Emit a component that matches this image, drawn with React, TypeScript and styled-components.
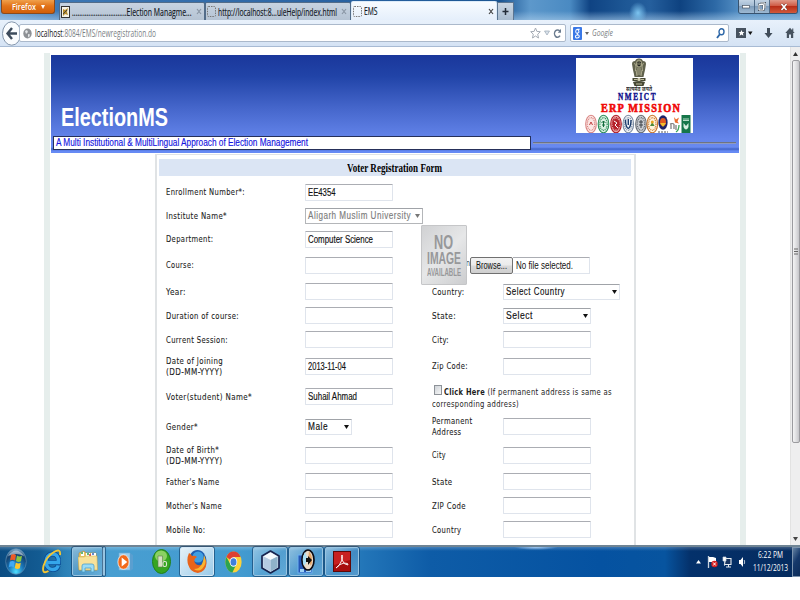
import React, { useLayoutEffect, useRef } from "react";
import styled, { createGlobalStyle, css } from "styled-components";

const ui = `"Open Sans", "Noto Sans", sans-serif`;
const verdana = `"DejaVu Sans", sans-serif`;
const arial = `"Liberation Sans", Arial, sans-serif`;
const times = `"Liberation Serif", "Times New Roman", serif`;

const Global = createGlobalStyle`
  * { box-sizing: border-box; }
  html, body { margin: 0; background: #fff; overflow: hidden; }
  svg { display: block; flex: none; }
`;

/* ---------- condensed text ---------- */

const FitBox = styled.span<{ $w: number }>`
  display: block;
  flex: none;
  width: ${(p) => p.$w}px;
  white-space: pre;
`;
const FitInner = styled.span`
  display: inline-block;
  transform-origin: 0 50%;
`;

function Fit({ w, children }: { w: number; children: React.ReactNode }) {
  const ref = useRef<HTMLSpanElement>(null);
  useLayoutEffect(() => {
    const el = ref.current;
    if (!el) return;
    el.style.transform = "none";
    const natural = el.getBoundingClientRect().width;
    el.style.transform = `scaleX(${w / natural})`;
  }, [w, children]);
  return (
    <FitBox $w={w}>
      <FitInner ref={ref}>{children}</FitInner>
    </FitBox>
  );
}

/* ---------- browser chrome ---------- */

const Screen = styled.div`
  width: 800px;
  height: 600px;
  display: flex;
  flex-direction: column;
  background: #fff;
  overflow: hidden;
`;
const TabStrip = styled.div`
  height: 20px;
  flex: none;
  display: flex;
  align-items: flex-start;
  background:
    radial-gradient(ellipse 9px 11px at 638px 13px, #7cc4f0, transparent),
    linear-gradient(180deg, rgba(255, 255, 255, 0) 55%, rgba(170, 205, 235, 0.6) 100%),
    linear-gradient(90deg, #6fa0d0 0, #3c77b4 60px, #2d66a5 300px, #1b5592 500px, #5d98cb 530px, #4a8ac2 570px, #0f4383 590px, #1d5795 625px, #255f9d 650px, #0e4280 680px, #2d69a6 715px, #5590c5 740px, #5c96c8 800px);
`;
const FirefoxButton = styled.div`
  width: 54px;
  height: 14px;
  margin: 0 4px 0 1px;
  padding: 0 0 0 10px;
  display: flex;
  align-items: center;
  gap: 5px;
  background: linear-gradient(#f0a04c, #e2741a 45%, #d25f08);
  border: 1px solid #8b4a1c;
  border-top: 0;
  border-radius: 0 0 3px 3px;
  color: #fff;
  font: 600 8.8px/12px ${ui};
`;
const Tab = styled.div<{ $active?: boolean }>`
  height: 18px;
  width: 146px;
  margin-top: 2px;
  padding: 0 4px 0 1px;
  display: flex;
  align-items: center;
  gap: 2px;
  color: #10151c;
  font: 10px/16px ${ui};
  -webkit-text-stroke: 0.15px currentColor;
  border: 1px solid #526c89;
  border-bottom: 0;
  border-radius: 2px 2px 0 0;
  background: linear-gradient(#c7d3e1, #b5c3d3);
  ${(p) =>
    p.$active &&
    css`
      margin-top: 1px;
      height: 19px;
      padding-right: 2px;
      border-color: #dcebf9;
      background: linear-gradient(#f7fbff, #e5effb);
    `}
`;
const Grow = styled.div`
  flex: 1;
`;
const NewTab = styled.div`
  width: 17px;
  height: 18px;
  margin-top: 2px;
  display: grid;
  place-items: center;
  border: 1px solid #5b7591;
  border-bottom: 0;
  background: linear-gradient(#c9d5e2, #a9bccf);
`;
const WindowControls = styled.div`
  display: flex;
  width: 60px;
  height: 14px;
  margin-right: 2px;
  border: 1px solid #38536f;
  border-top: 0;
  border-radius: 0 0 3px 3px;
  overflow: hidden;
`;
const Control = styled.div<{ $close?: boolean }>`
  flex: ${(p) => (p.$close ? "0 0 27px" : "1")};
  display: grid;
  place-items: center;
  border-right: ${(p) => (p.$close ? "0" : "1px solid #4f6a86")};
  background: ${(p) =>
    p.$close
      ? "linear-gradient(#e09a8a, #cf5b45 45%, #b82e18 50%, #d2593a)"
      : "linear-gradient(#c2d3e4, #a3bbd3 45%, #7f9dbb 50%, #9db9d3)"};
`;
const NavBar = styled.div`
  height: 27px;
  flex: none;
  display: flex;
  align-items: center;
  padding-left: 2px;
  background: linear-gradient(#e8f1fb, #d5e3f4);
  border-bottom: 1px solid #a8bbd4;
`;
const Field = styled.div<{ $w: number; $url?: boolean }>`
  width: ${(p) => p.$w}px;
  height: 18px;
  display: flex;
  align-items: center;
  background: #fff;
  border: 1px solid #abb9cb;
  border-radius: 2px;
  font: ${(p) => (p.$url ? "10px" : "italic 9.5px")}/16px ${ui};
  color: #7b7f85;
  margin-left: ${(p) => (p.$url ? "-3px" : "4px")};
  padding: 0 3px 0 ${(p) => (p.$url ? "3px" : "2px")};
  gap: 3px;
`;
const Host = styled.b`
  font-weight: 400;
  color: #111;
`;
const NavIcons = styled.div`
  display: flex;
  align-items: center;
  margin-left: 7px;
`;
const IconSlot = styled.div<{ $ml: number }>`
  margin-left: ${(p) => p.$ml}px;
`;

/* ---------- page ---------- */

const Viewport = styled.div`
  height: 498px;
  flex: none;
  display: flex;
  background: #fff;
`;
const Rail = styled.div<{ $ml: number }>`
  width: 6px;
  margin: 6px 0 0 ${(p) => p.$ml}px;
  background: #e6eeec;
`;
const Page = styled.main`
  width: 688px;
  margin: 8px 1px 0;
  display: flex;
  flex-direction: column;
  align-items: center;
`;
const Banner = styled.header`
  width: 688px;
  height: 98px;
  flex: none;
  display: flex;
  flex-direction: column;
  background: linear-gradient(#1a379b 0, #2144a8 22%, #4667cc 55%, #6384ea 85%, #698af0 94%, #4264c8 96%, #668af4 98%);
`;
const BannerTop = styled.div`
  height: 81px;
  display: flex;
  justify-content: space-between;
  padding: 3px 46px 0 9.5px;
`;
const SiteName = styled.h1`
  margin: 44px 0 0;
  color: #fff;
  font: bold 26px/30px ${arial};
`;
const LogoCard = styled.div`
  width: 117px;
  height: 75px;
  padding-left: 8px;
  background: #fff;
  display: flex;
  flex-direction: column;
  align-items: center;
  overflow: hidden;
`;
const Motto = styled.div`
  font: bold 6px/7px "Noto Sans", sans-serif;
  color: #333;
  margin-top: -1px;
`;
const Nmeict = styled.div`
  margin-left: -2px;
  font: bold 9.5px/9px ${times};
  color: #10108c;
  -webkit-text-stroke: 0.4px #10108c;
  letter-spacing: 2px;
`;
const Erp = styled.div`
  margin-left: 5px;
  font: bold 12px/12px ${times};
  color: #f00808;
  -webkit-text-stroke: 0.6px #f00808;
  letter-spacing: 1.4px;
`;
const TagRow = styled.div`
  height: 14px;
  display: flex;
  align-items: center;
  gap: 2px;
  padding: 0 3px 0 2px;
`;
const TagLine = styled.div`
  width: 478px;
  height: 14px;
  padding-left: 2px;
  background: #fff;
  border: 1px solid #26305a;
  border-width: 1px 1.5px;
  color: #1414e0;
  font: 10.3px/12px ${arial};
  -webkit-text-stroke: 0.15px #1414e0;
`;
const Rule = styled.div`
  flex: 1;
  height: 2px;
  margin-bottom: 1px;
  background: #6f7480;
  border-bottom: 1px solid #8f9bc0;
`;
const Panel = styled.section`
  width: 481px;
  height: 391px;
  margin-top: 1px;
  padding: 4px 3px 0 2px;
  border: 1px solid #e0e3e5;
  border-width: 1px 2px 0;
`;
const PanelTitle = styled.h2`
  margin: 0;
  height: 17px;
  display: flex;
  justify-content: center;
  background: #dbe5f4;
  color: #000;
  font: bold 11.5px/18px ${times};
`;
const Form = styled.form`
  margin: 4px 0 0 7.5px;
  display: grid;
  grid-template-columns: 139px 127px 71px 1fr;
  grid-template-rows: 24px 23px 24px 28px 25px 23px 25px 28px 33px 27px 30px 23px 25px 23px;
  align-items: center;
`;
const Label = styled.div`
  color: #1c1c1c;
  font: 9.2px/10.6px ${verdana};
  letter-spacing: 0.5px;
  -webkit-text-stroke: 0.1px #1c1c1c;
  padding-top: 1px;
`;
const Agree = styled.div`
  grid-column: span 2;
  color: #1c1c1c;
  font: 9.2px/11.2px ${verdana};
  letter-spacing: 0.4px;
  padding-top: 2px;
`;
const AgreeLine = styled.div`
  display: flex;
  align-items: center;
`;
const Check = styled.i`
  width: 8px;
  height: 10px;
  margin: -3px 2px 0 2px;
  border: 1px solid #8d9298;
  background: linear-gradient(135deg, #cfd3d8, #f6f6f6);
`;
const Input = styled.div`
  width: 88px;
  height: 17px;
  padding: 1px 0 0 1.5px;
  border: 1px solid #dfe4ec;
  border-top-color: #abadb3;
  border-radius: 1px;
  background: #fff;
  color: #111;
  font: 10px/14px ${arial};
  -webkit-text-stroke: 0.15px #111;
`;
const Select = styled.div<{ $w: number; $off?: boolean }>`
  width: ${(p) => p.$w}px;
  height: 16px;
  padding: 0 2px;
  display: flex;
  align-items: center;
  justify-content: space-between;
  border: 1px solid ${(p) => (p.$off ? "#b4b6b9" : "#dfe4ec")};
  border-top-color: #a0a3a8;
  background: #fff;
  color: ${(p) => (p.$off ? "#7c7c7c" : "#111")};
  font: 10px/14px ${arial};
  letter-spacing: 0.6px;
  -webkit-text-stroke: 0.15px currentColor;
`;
const Photo = styled.div`
  position: relative;
  grid-column: span 2;
  height: 17px;
`;
const FileRow = styled.div`
  display: flex;
  align-items: center;
  padding-left: 34px;
  height: 17px;
`;
const Tail = styled.div`
  width: 4px;
  height: 17px;
  font: 9.2px/11px ${verdana};
  color: #333;
`;
const Browse = styled.div`
  width: 43px;
  height: 17px;
  padding-left: 5px;
  border: 1px solid #707070;
  border-radius: 2px;
  background: linear-gradient(#f2f2f2, #ebebeb 48%, #dadada 52%, #cfcfcf);
  color: #111;
  font: 10px/15px ${arial};
`;
const FileName = styled.div`
  width: 77px;
  height: 17px;
  padding-left: 3px;
  border: 1px solid #dfe4ec;
  border-top-color: #abadb3;
  border-left: 0;
  color: #111;
  font: 10px/15px ${arial};
`;
/* The portrait placeholder overlaps the label and the file picker. */
const NoImage = styled.div`
  position: absolute;
  left: -11px;
  top: -32px;
  width: 46px;
  height: 60px;
  padding: 6px 0 0 5px;
  border-radius: 1px;
  background: linear-gradient(135deg, #d0d1d3, #e6e7e8 50%, #cccdcf);
  border: 1px solid #c5c6c8;
  color: #97989a;
  font-family: ${arial};
  font-weight: bold;
`;
const NoImageLine = styled.div<{ $size: number; $h: number; $ml?: number }>`
  font-size: ${(p) => p.$size}px;
  line-height: ${(p) => p.$h}px;
  margin-left: ${(p) => p.$ml ?? 0}px;
`;
const ScrollBar = styled.div`
  width: 10px;
  margin-left: auto;
  display: flex;
  flex-direction: column;
  align-items: center;
  background: #eeeeef;
  border-left: 1px solid #e2e2e2;
`;
const Arrow = styled.div<{ $h: number }>`
  height: ${(p) => p.$h}px;
  display: grid;
  place-items: center;
`;
const Thumb = styled.div`
  width: 8px;
  height: 383px;
  display: grid;
  place-items: center;
  border: 1px solid #9b9b9f;
  border-radius: 2px;
  background: linear-gradient(90deg, #f4f4f5, #e0e0e2 50%, #c6c6ca);
`;

/* ---------- taskbar ---------- */

const TaskBar = styled.footer`
  height: 32px;
  flex: none;
  display: flex;
  border-top: 2px solid #6f8494;
  background:
    radial-gradient(ellipse 22px 3px at 536px 0, rgba(180, 215, 250, 0.9), transparent),
    linear-gradient(180deg, rgba(255, 255, 255, 0.22) 0, rgba(255, 255, 255, 0) 4px),
    linear-gradient(90deg, #0b4c82 0, #135b92 40px, #2b80b6 64px, #489ed1 110px, #439bd0 240px, #3186c2 330px, #2275b8 365px, #0e5ca7 430px, #0552a1 600px, #07549f 665px, #04316b 690px, #052b5e 800px);
`;
const Slot = styled.div<{ $w: number; $ml?: number; $mode?: "open" | "active" }>`
  width: ${(p) => p.$w}px;
  height: 29px;
  margin-left: ${(p) => p.$ml ?? 0}px;
  display: grid;
  place-items: center;
  ${(p) =>
    p.$mode &&
    css`
      border: 1px solid ${p.$mode === "active" ? "#d4e8f6" : "#98c4e1"};
      outline: 1px solid rgba(10, 50, 90, 0.55);
      outline-offset: 0;
      border-radius: 2px;
      background: ${p.$mode === "active"
        ? "linear-gradient(135deg, rgba(255,255,255,.85), rgba(200,228,246,.65))"
        : "linear-gradient(135deg, rgba(255,255,255,.42), rgba(255,255,255,.12) 55%, rgba(170,215,240,.35))"};
    `}
`;
const Tray = styled.div`
  margin-left: auto;
  display: flex;
  align-items: center;
`;
const Clock = styled.div`
  width: 38px;
  margin-left: 5px;
  display: flex;
  flex-direction: column;
  align-items: center;
  color: #fff;
  font: 9.6px/12.6px ${ui};
`;
const Peek = styled.div`
  width: 8px;
  height: 30px;
  margin-left: 3px;
  border: 1px solid #7c93ad;
  border-right: 0;
  background: linear-gradient(120deg, #6482a2, #16396b 45%, #0c2c59);
`;

const Down = ({ w = 6, h = 4, c = "#111" }: { w?: number; h?: number; c?: string }) => (
  <svg width={w} height={h} viewBox="0 0 6 4" preserveAspectRatio="none">
    <path d="M0 0h6L3 4z" fill={c} />
  </svg>
);
const Cross = ({ c }: { c: string }) => (
  <svg width="6" height="7" viewBox="0 0 6 7">
    <path d="M1 1l4 5M5 1L1 6" stroke={c} strokeWidth="1.2" />
  </svg>
);
const BlankIcon = () => (
  <svg width="9" height="11" viewBox="0 0 9 11">
    <rect x=".5" y=".5" width="8" height="10" rx="1" fill="none" stroke="#777" strokeDasharray="1.5 1" />
  </svg>
);

const Emblem = () => (
  <svg width="16" height="29" viewBox="0 0 16 29">
    <path d="M4 3q1-3 4-2.500Q11 0 12 3q3 0 3 3l-1 6q-1 4-1.500 7h-9Q3 16 2 12L1 6Q1 3 4 3z" fill="#60614c" />
    <path d="M6 3q2-2 4 0l.6 4-1 2H6.500l-1-2zM3.500 5l1.500 3-.5 5M12.500 5L11 8l.5 5M7 10v7M9 10v7M5 12l1 6M11 12l-1 6" stroke="#b4b294" fill="none" strokeWidth=".9" />
    <path d="M6.500 4.500h1M8.800 4.500h1M7 7.500h2" stroke="#222" />
    <path d="M1.500 20h13v3h-13zM2 24q6-2 12 0l-1.500 4h-9z" fill="#484935" />
    <path d="M3 21.500h3M10 21.500h3M5 26h6" stroke="#c0bea0" />
    <circle cx="8" cy="21.500" r="1.700" fill="#d0cdb0" />
  </svg>
);

const seals = [
  { x: 6, c: "#d98583", f: "#fbe6e4" },
  { x: 18.5, c: "#2b8c58", f: "#d8efe0" },
  { x: 31, c: "#b01b25", f: "#e9a5a5" },
  { x: 43.3, c: "#7c8da3", f: "#f4f6f9" },
  { x: 56, c: "#666b72", f: "#c9cdd2" },
  { x: 67.3, c: "#c9762f", f: "#fff3dc" },
];
const Seals = () => (
  <svg width="107" height="20" viewBox="0 0 107 20">
    {seals.map((s, i) => (
      <g key={i}>
        <ellipse cx={s.x} cy="10" rx="5.300" ry="8.800" fill={s.f} stroke={s.c} strokeWidth="1.100" />
        <ellipse cx={s.x} cy="10" rx="3.700" ry="6.300" fill="none" stroke={s.c} strokeDasharray="1 .8" strokeWidth="1.200" />
      </g>
    ))}
    <path d="M4.500 11L6 8l1.500 3" stroke="#c04040" fill="none" />
    <path d="M18.500 7v6M16.500 9l2-2 2 2M17 11h3" stroke="#116b3c" fill="none" />
    <ellipse cx="31" cy="10" rx="3.500" ry="5.500" fill="#b5202a" /><path d="M29 7l3 2-2 2 3 3" stroke="#fff" fill="none" />
    <path d="M40.500 6q0 7 2.800 8.500Q46 13 46 6M43.300 5v6" stroke="#1c3d6d" fill="none" strokeWidth="1.400" />
    <path d="M54 8h4M54 11h4M56 6v8" stroke="#3b4046" />
    <path d="M65 12l2.300-4 2.300 4z" fill="#4a8a3a" /><circle cx="67.300" cy="8" r="1.500" fill="#e7a01e" />
    <ellipse cx="78" cy="8.500" rx="4.600" ry="7.300" fill="#1d2368" />
    <ellipse cx="78" cy="8" rx="3" ry="4" fill="#e15a20" /><path d="M75 9h6l-3 4z" fill="#f0c130" />
    <path d="M73 18h10" stroke="#555" strokeDasharray="2 1" />
    <path d="M85 10q2-1 4 0M86 10v5M89 10v5M91 11v5" stroke="#777" fill="none" strokeWidth="1.200" />
    <path d="M89 3l2 2.500 3-2-1.500 4 1.500 2-4-1z" fill="#e96b2b" /><path d="M94 11q0 5-3 7" stroke="#3ba457" strokeWidth="1.300" fill="none" />
    <rect x="96.500" y="1" width="9" height="18" fill="#16764a" />
    <path d="M98 5h6M98 6.500h6" stroke="#b7dbc7" /><path d="M98.500 9v4q2.500 5 5 0V9l-2.500 3z" fill="#d8eee1" />
  </svg>
);

/* ---------- data ---------- */

type Cell = React.ReactNode;
const L = (lines: [string, number][]) => (
  <Label>{lines.map(([t, w]) => <Fit key={t} w={w}>{t}</Fit>)}</Label>
);
const I = (text?: string, w = 0) => <Input>{text && <Fit w={w}>{text}</Fit>}</Input>;
const S = (text: string, w: number, box: number, off = false) => (
  <Select $w={box} $off={off}>
    <Fit w={w}>{text}</Fit>
    <Down w={5} c={off ? "#777" : "#111"} />
  </Select>
);

const rows: Cell[][] = [
  [L([["Enrollment Number*:", 79]]), I("EE4354", 27.5), <i />, <i />],
  [L([["Institute Name*", 61]]), S("Aligarh Muslim University", 103, 118, true), <i />, <i />],
  [L([["Department:", 47.5]]), I("Computer Science", 65), <i />, <i />],
  [
    L([["Course:", 28]]),
    I(),
    <Photo>
      <FileRow>
        <Tail><Fit w={4}>n</Fit></Tail>
        <Browse><Fit w={31}>Browse...</Fit></Browse>
        <FileName><Fit w={57}>No file selected.</Fit></FileName>
      </FileRow>
      <NoImage>
        <NoImageLine $size={21} $h={19} $ml={7}><Fit w={19}>NO</Fit></NoImageLine>
        <NoImageLine $size={17} $h={16}><Fit w={34}>IMAGE</Fit></NoImageLine>
        <NoImageLine $size={11} $h={10}><Fit w={34}>AVAILABLE</Fit></NoImageLine>
      </NoImage>
    </Photo>,
  ],
  [L([["Year:", 20]]), I(), L([["Country:", 32.5]]), S("Select Country", 59, 117)],
  [L([["Duration of course:", 73]]), I(), L([["State:", 24]]), S("Select", 27, 88)],
  [L([["Current Session:", 62]]), I(), L([["City:", 17]]), I()],
  [L([["Date of Joining", 57], ["(DD-MM-YYYY)", 56.5]]), I("2013-11-04", 38), L([["Zip Code:", 36]]), I()],
  [
    L([["Voter(student) Name*", 86]]),
    I("Suhail Ahmad", 49),
    <Agree>
      <AgreeLine>
        <Check />
        <Fit w={41}><b>Click Here</b></Fit>
        <Fit w={127}> (If permanent address is same as</Fit>
      </AgreeLine>
      <Fit w={87}>corresponding address)</Fit>
    </Agree>,
  ],
  [L([["Gender*", 32]]), S("Male", 20, 47), L([["Permanent", 40.5], ["Address", 29.5]]), I()],
  [L([["Date of Birth*", 53], ["(DD-MM-YYYY)", 56.5]]), I(), L([["City", 14]]), I()],
  [L([["Father's Name", 53.5]]), I(), L([["State", 20.5]]), I()],
  [L([["Mother's Name", 56]]), I(), L([["ZIP Code", 34]]), I()],
  [L([["Mobile No:", 39.5]]), I(), L([["Country", 29.5]]), I()],
];

/* ---------- taskbar icons ---------- */

const StartOrb = () => (
  <svg width="22" height="27" viewBox="0 0 22 27">
    <defs>
      <radialGradient id="orb" cx=".5" cy=".9" r=".9">
        <stop offset="0" stopColor="#4fe0ff" /><stop offset=".4" stopColor="#1a76b8" /><stop offset=".75" stopColor="#12406f" /><stop offset="1" stopColor="#8ab2cf" />
      </radialGradient>
    </defs>
    <ellipse cx="11" cy="13.500" rx="10.300" ry="12.800" fill="url(#orb)" stroke="#5c8db2" strokeWidth=".7" />
    <path d="M6 7q2.500-2 5 0l-1 5.500q-2.500-1.500-5 0z" fill="#ee5a24" />
    <path d="M12 7.500q2.500 2 5 .3l-1 5.500q-2.500 1.500-5-.3z" fill="#8cc63f" />
    <path d="M4.800 13.800q2.500-1.500 5 0l-1 5.500q-2.500-1.600-5 0z" fill="#3fa9f5" />
    <path d="M10.800 14.500q2.500 2 5 .3l-1 5.500q-2.500 1.500-5-.3z" fill="#fcc62d" />
    <path d="M3 8Q11-3 19 8Q11 4 3 8z" fill="#fff" opacity=".45" />
  </svg>
);
const IeIcon = () => (
  <svg width="20" height="25" viewBox="0 0 20 25">
    <path d="M4 13.500h12.500C17 8 14.500 5 10.500 5S4 8.500 4 13s3 7.500 6.500 7.500c3 0 5-1.300 5.700-4" fill="none" stroke="#0b4b94" strokeWidth="5" />
    <path d="M4 13.500h12.500C17 8 14.500 5 10.500 5S4 8.500 4 13s3 7.500 6.500 7.500c3 0 5-1.300 5.700-4" fill="none" stroke="#35a6ea" strokeWidth="3.400" />
    <path d="M18 6Q19-1 12 3Q4 8 1.500 17q-2 9 5 5" fill="none" stroke="#f4c532" strokeWidth="1.900" />
  </svg>
);
const FolderIcon = () => (
  <svg width="20" height="23" viewBox="0 0 20 23">
    <path d="M1 3l5-2 2 2h10l1 17H1z" fill="#e9c568" stroke="#b98e32" strokeWidth=".6" />
    <path d="M3 2h3v4H3zM8 3h4v4H8zM13 3h5v4h-5z" fill="#fff" />
    <path d="M3 3h2M9 4h2" stroke="#32a24a" strokeWidth="1.500" /><path d="M14 4h2" stroke="#3265c0" strokeWidth="1.500" /><path d="M11 5h2" stroke="#d34" strokeWidth="1.500" />
    <path d="M0 7h6l2-1h11l.5 14H1z" fill="#f8e29a" stroke="#cfa845" strokeWidth=".5" />
    <path d="M4 22v-6q0-2 2-2h8q2 0 2 2v6h-3v-4H7v4z" fill="#9bdcf5" stroke="#4c9fc9" strokeWidth=".8" />
  </svg>
);
const MediaIcon = () => (
  <svg width="17" height="20" viewBox="0 0 17 20">
    <path d="M2 1h11v17H2z" fill="#9fcfed" stroke="#6fb0da" strokeWidth=".6" /><path d="M13 1l3 2v14l-3 2z" fill="#5a9fd0" />
    <ellipse cx="6.500" cy="10" rx="5.600" ry="7.300" fill="#f26a1b" stroke="#fff" strokeWidth=".7" /><path d="M4.700 5.500l5.500 4.500-5.500 4.500z" fill="#fff" />
  </svg>
);
const GreenIcon = () => (
  <svg width="19" height="25" viewBox="0 0 19 25">
    <ellipse cx="9.500" cy="12.500" rx="9" ry="12" fill="#36a521" stroke="#20801c" />
    <ellipse cx="9" cy="7" rx="6" ry="5.500" fill="#a8e07a" opacity=".75" />
    <path d="M6 7h4.500v11H6z" fill="#d5e0c2" stroke="#5d7a4e" strokeWidth=".6" /><rect x="11" y="12.500" width="3.500" height="5" rx="1.500" fill="none" stroke="#dfe8d4" strokeWidth="1.100" />
  </svg>
);
const FirefoxIcon = () => (
  <svg width="20" height="25" viewBox="0 0 20 25">
    <ellipse cx="10.500" cy="12" rx="9" ry="11" fill="#1e5eb0" /><ellipse cx="11" cy="8" rx="5.500" ry="5.500" fill="#3f9fe2" />
    <path d="M2 4q2 1 3 3 3-1 5 1-4 2-2 6 3 4 8 1 2-3 1-7 5 6 0 13-6 6-13 0Q-2 13 2 4z" fill="#e8641b" />
    <path d="M17 6q4 8-2 14-4 3-8 0 9 0 10-14z" fill="#f8b530" />
  </svg>
);
const ChromeIcon = () => (
  <svg width="17" height="22" viewBox="0 0 24 24" preserveAspectRatio="none">
    <circle cx="12" cy="12" r="11.500" fill="#fcd23a" />
    <path d="M12 12L2 6.500A11.500 11.500 0 0122 6.500H12z" fill="#dd4033" />
    <path d="M2 6.500a11.500 11.500 0 008.500 17L16 14.500 8 15z" fill="#2da44e" />
    <circle cx="12" cy="12" r="5.300" fill="#fff" /><circle cx="12" cy="12" r="4.200" fill="#3f7fdc" />
  </svg>
);
const CubeIcon = () => (
  <svg width="19" height="24" viewBox="0 0 19 24">
    <path d="M9.500 1L18 6v12l-8.500 5L1 18V6z" fill="#cfdfee" stroke="#17234e" strokeWidth="1.700" strokeLinejoin="round" />
    <path d="M9.500 2.500L16.500 6.500 9.500 10 2.500 6.500z" fill="#f5fafd" /><path d="M9.500 10l7-3.500v11l-7 4z" fill="#8fb2c9" /><path d="M9.500 10L2.500 6.500v11l7 4z" fill="#b5cbe2" />
  </svg>
);
const DiscIcon = () => (
  <svg width="18" height="25" viewBox="0 0 18 25">
    <rect x="1" y="6" width="14" height="18" fill="#2356b5" stroke="#6fb0ef" /><path d="M3 20h4v3H3zM9 21h5v2H9z" fill="#9ed2f5" />
    <ellipse cx="11" cy="11" rx="6" ry="10" fill="#eadccb" stroke="#0b0b13" strokeWidth="1.700" />
    <path d="M8 3q-4 7-1 14L11 11z" fill="#a9dff5" /><path d="M12 2q5 7 2 15L11 11z" fill="#e5a668" />
    <path d="M11 7l4 4-4 5v-3H9v-4h2z" fill="#101010" />
  </svg>
);
const AdobeIcon = () => (
  <svg width="18" height="21" viewBox="0 0 18 21">
    <rect x=".5" y=".5" width="17" height="20" fill="#a80d0d" stroke="#5d0808" /><path d="M1 1h16v8L1 14z" fill="#c82020" />
    <path d="M3 17q3-1 6-8 1-5 0-5t0 5q2 5 6 5 1-2-4-2-5 1-8 5z" fill="none" stroke="#fff" strokeWidth=".9" />
  </svg>
);

export default function App() {
  return (
    <Screen>
      <Global />
      <TabStrip>
        <FirefoxButton><Fit w={24}>Firefox</Fit><Down w={4} c="#fff" /></FirefoxButton>
        <Tab>
          <svg width="9" height="12" viewBox="0 0 9 12">
            <rect x=".5" y=".5" width="8" height="11" fill="#f7f3e6" stroke="#333" /><path d="M2 3l2 1 3-2-1 4 1 3-3-1-2 2z" fill="#b48a2b" /><path d="M2 8l4-4" stroke="#444" />
          </svg>
          <Fit w={119.5}>..............................Election Managme...</Fit>
          <Grow /><Cross c="#8a96a4" />
        </Tab>
        <Tab><BlankIcon /><Fit w={119}>http://localhost:8...uleHelp/index.html</Fit><Grow /><Cross c="#8a96a4" /></Tab>
        <Tab $active><BlankIcon /><Fit w={13.5}>EMS</Fit><Grow /><Cross c="#444" /></Tab>
        <NewTab>
          <svg width="7" height="9" viewBox="0 0 7 9"><path d="M3.500 1v7M.5 4.500h6" stroke="#222b36" strokeWidth="1.500" /></svg>
        </NewTab>
        <Grow />
        <WindowControls>
          <Control><svg width="8" height="5" viewBox="0 0 8 5"><rect x=".5" y="1.500" width="7" height="2.500" fill="#fff" stroke="#4b5663" strokeWidth=".7" /></svg></Control>
          <Control><svg width="8" height="9" viewBox="0 0 8 9"><path d="M2.500 1H7v5.500M1 2.500h4.500V8H1z" fill="none" stroke="#4b5663" strokeWidth="2" /><path d="M2.500 1H7v5.500M1 2.500h4.500V8H1z" fill="none" stroke="#fff" /></svg></Control>
          <Control $close><svg width="8" height="8" viewBox="0 0 8 8"><path d="M1.500 1l5 6M6.500 1l-5 6" stroke="#6a2a22" strokeWidth="2.600" /><path d="M1.500 1l5 6M6.500 1l-5 6" stroke="#fff" strokeWidth="1.700" /></svg></Control>
        </WindowControls>
      </TabStrip>

      <NavBar>
        <svg width="20" height="25" viewBox="0 0 20 25">
          <ellipse cx="9.700" cy="12.500" rx="9.200" ry="11.700" fill="#fafcfe" stroke="#8496ac" /><path d="M15 12.500H6M10 7l-4.500 5.500L10 18" fill="none" stroke="#3d4b5c" strokeWidth="2.400" />
        </svg>
        <Field $w={547} $url>
          <svg width="9" height="11" viewBox="0 0 9 11"><ellipse cx="4.500" cy="5.500" rx="4.200" ry="5" fill="#8e9195" /><path d="M2 3l2-1 1 2-2 2zM5 6l2 .5-1 3-1-1zM6.500 2l1 2" fill="#e4e6e8" /></svg>
          <Fit w={121}><Host>localhost</Host>:8084/EMS/newregistration.do</Fit>
          <Grow />
          <svg width="11" height="12" viewBox="0 0 11 12"><path d="M5.500 1l1.400 3.400 3.400.3-2.600 2.500.8 3.800-3-2-3 2 .8-3.800L.7 4.700l3.400-.3z" fill="#fff" stroke="#a4abb4" /></svg>
          <svg width="6" height="6" viewBox="0 0 6 6"><path d="M.5 1h5L3 5z" fill="#dbe3ec" stroke="#9aa6b5" strokeWidth=".7" /></svg>
          <svg width="9" height="11" viewBox="0 0 9 11"><path d="M7 3.500A3 3.700 0 107 7.700" fill="none" stroke="#6b7c8f" strokeWidth="1.500" /><path d="M8 .8v4H4.800z" fill="#6b7c8f" /></svg>
        </Field>
        <Field $w={159}>
          <svg width="9" height="13" viewBox="0 0 10 14" preserveAspectRatio="none"><rect width="10" height="14" rx="1" fill="#3a78e6" /><path d="M7.500 2.500H5Q3 2.500 3 4.700T5 6.600t1.500-2Q6.500 3 5 2.700M5 6.800q-.8 1 .5 1.500 1.700.8 1.500 2T4.800 11.800 2.700 10.300 5.500 8.700" fill="none" stroke="#fff" strokeWidth="1.100" /></svg>
          <Down w={4} h={3} c="#666" />
          <Fit w={21}>Google</Fit>
          <Grow />
          <svg width="9" height="11" viewBox="0 0 9 11"><ellipse cx="5.500" cy="3.800" rx="2.500" ry="3" fill="none" stroke="#2d67a8" strokeWidth="1.400" /><path d="M4 6L1 10" stroke="#2d67a8" strokeWidth="1.900" /></svg>
        </Field>
        <NavIcons>
          <svg width="17" height="12" viewBox="0 0 17 12"><path d="M0 1h10v10H0z" fill="#46525f" /><path d="M5.500 3l.9 2 2 .1-1.500 1.400.5 2.200-1.900-1.200-1.900 1.200.5-2.200L2.600 5.100l2-.1z" fill="#fff" /><path d="M12 4.500h4.500L14.300 8z" fill="#111" /></svg>
          <IconSlot $ml={11}><svg width="9" height="12" viewBox="0 0 9 12"><path d="M3 1h3v5h2.500l-4 5-4-5H3z" fill="#414d5a" /></svg></IconSlot>
          <IconSlot $ml={11.5}><svg width="10" height="12" viewBox="0 0 10 12"><path d="M5 .8L.3 6h1.500v5h2.200V7.500h2V11h2.200V6h1.500L8.300 4.500V1.500H7.200v1.700z" fill="#46525f" /></svg></IconSlot>
        </NavIcons>
      </NavBar>

      <Viewport>
        <Rail $ml={44} />
        <Page>
          <Banner>
            <BannerTop>
              <SiteName><Fit w={107}>ElectionMS</Fit></SiteName>
              <LogoCard>
                <Emblem />
                <Motto><Fit w={26}>सत्यमेव जयते</Fit></Motto>
                <Nmeict><Fit w={39}>NMEICT</Fit></Nmeict>
                <Erp><Fit w={80}>ERP MISSION</Fit></Erp>
                <Seals />
              </LogoCard>
            </BannerTop>
            <TagRow>
              <TagLine><Fit w={252}>A Multi Institutional &amp; MultiLingual Approach of Election Management</Fit></TagLine>
              <Rule />
            </TagRow>
          </Banner>
          <Panel>
            <PanelTitle><Fit w={95}>Voter Registration Form</Fit></PanelTitle>
            <Form>
              {rows.map((cells, r) => (
                <React.Fragment key={r}>
                  {cells.map((cell, c) => <React.Fragment key={c}>{cell}</React.Fragment>)}
                </React.Fragment>
              ))}
            </Form>
          </Panel>
        </Page>
        <Rail $ml={0} />
        <ScrollBar>
          <Arrow $h={13}><svg width="5" height="4" viewBox="0 0 5 4"><path d="M0 4h5L2.500 0z" fill="#333" /></svg></Arrow>
          <Thumb><svg width="4" height="7" viewBox="0 0 4 7"><path d="M0 1h4M0 3.500h4M0 6h4" stroke="#666" /></svg></Thumb>
          <Grow />
          <Arrow $h={12}><Down w={5} c="#444" /></Arrow>
        </ScrollBar>
      </Viewport>

      <TaskBar>
        <Slot $w={32}><StartOrb /></Slot>
        <Slot $w={38} $ml={1}><IeIcon /></Slot>
        <Slot $w={31} $ml={1} $mode="open"><FolderIcon /></Slot>
        <Slot $w={2} $ml={0} $mode="open" />
        <Slot $w={36} $ml={2}><MediaIcon /></Slot>
        <Slot $w={36}><GreenIcon /></Slot>
        <Slot $w={34} $ml={1} $mode="active"><FirefoxIcon /></Slot>
        <Slot $w={38}><ChromeIcon /></Slot>
        <Slot $w={34} $ml={1} $mode="open"><CubeIcon /></Slot>
        <Slot $w={34} $ml={2} $mode="open"><DiscIcon /></Slot>
        <Slot $w={34} $ml={2} $mode="open"><AdobeIcon /></Slot>
        <Tray>
          <svg width="50" height="14" viewBox="0 0 50 14">
            <path d="M0 8.500h5L2.500 5z" fill="#fff" />
            <path d="M12.500 1v12" stroke="#c9d3de" strokeWidth="1.300" /><path d="M13 2h4l3 1v5h-3l-1-1h-3z" fill="#fff" /><circle cx="18.500" cy="9" r="3.200" fill="#d81f1f" /><path d="M17.200 7.500l2.600 3M19.800 7.500l-2.600 3" stroke="#fff" />
            <path d="M29.500 3.500H35v6h-6.500z" fill="#16335f" stroke="#e6ebf0" strokeWidth="1.100" /><path d="M30 12h5M32.500 10v2" stroke="#e6ebf0" /><path d="M27 2h3v4h-3zM28.500 6v5" fill="#fff" stroke="#cdd6df" strokeWidth=".7" />
            <path d="M43 5h1.500L47 2v10l-2.500-3H43z" fill="#fff" /><path d="M48.200 5q1 2 0 4" stroke="#b8c6d6" fill="none" />
          </svg>
          <Clock><Fit w={25}>6:22 PM</Fit><Fit w={35}>11/12/2013</Fit></Clock>
          <Peek />
        </Tray>
      </TaskBar>
    </Screen>
  );
}
